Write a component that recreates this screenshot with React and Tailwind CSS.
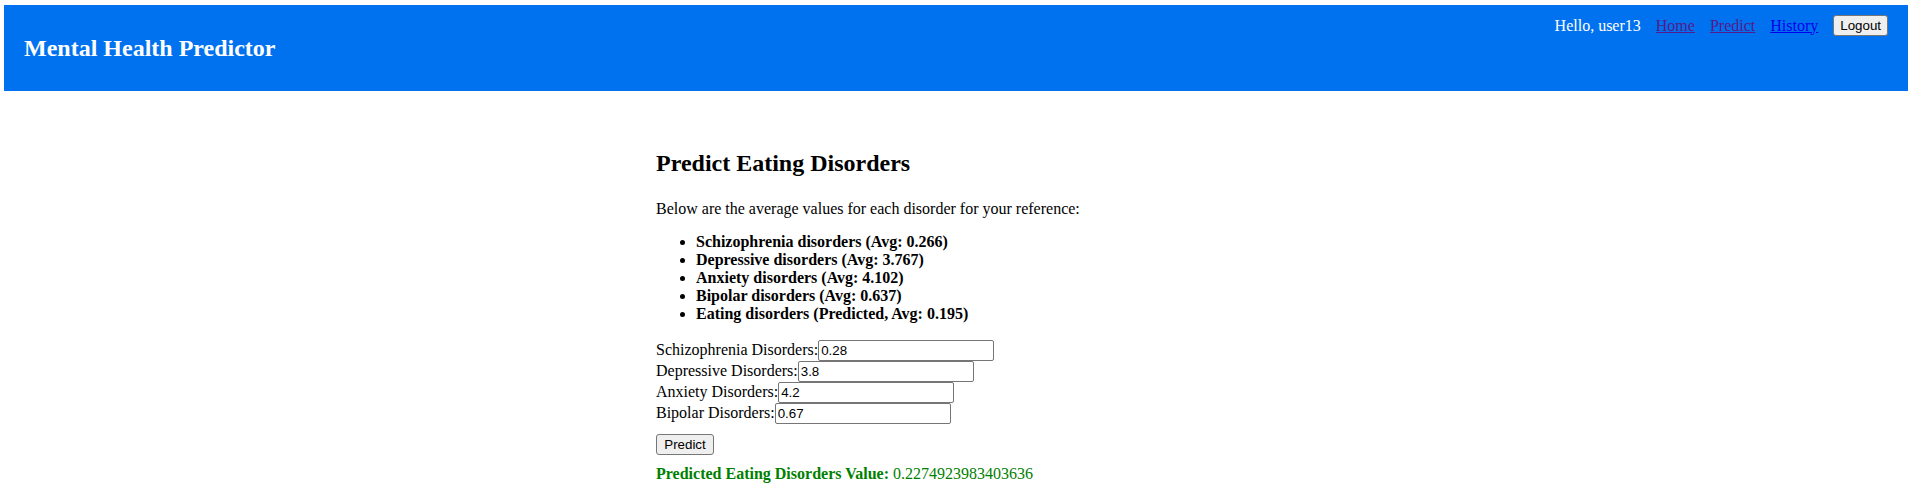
import React, { useState } from 'react';

const averages = [
  { label: 'Schizophrenia disorders', avg: '0.266' },
  { label: 'Depressive disorders', avg: '3.767' },
  { label: 'Anxiety disorders', avg: '4.102' },
  { label: 'Bipolar disorders', avg: '0.637' },
  { label: 'Eating disorders', avg: '0.195', predicted: true },
];

const fields = [
  { name: 'schizophrenia', label: 'Schizophrenia Disorders:', value: '0.28' },
  { name: 'depressive', label: 'Depressive Disorders:', value: '3.8' },
  { name: 'anxiety', label: 'Anxiety Disorders:', value: '4.2' },
  { name: 'bipolar', label: 'Bipolar Disorders:', value: '0.67' },
];

const App = () => {
  const [form, setForm] = useState(
    Object.fromEntries(fields.map((f) => [f.name, f.value]))
  );

  return (
    <div className="font-['Liberation_Serif','Times_New_Roman',serif] text-[16px] leading-[18px] text-black bg-white min-h-screen">
      {/* Header */}
      <header className="ml-[4px] mr-[7px] mt-[5px] h-[86px] bg-[#0072f0] text-white flex justify-between px-[20px]">
        <h2 className="self-center text-[24px] leading-normal font-bold">Mental Health Predictor</h2>
        <nav className="self-start pt-[10px] flex items-center gap-[15px]">
          <span>Hello, user13</span>
          <a href="#" className="underline text-[#551a8b]">Home</a>
          <a href="#" className="underline text-[#551a8b]">Predict</a>
          <a href="#" className="underline text-[#0000ee]">History</a>
          <button className="h-[21px] px-[6px] bg-[#efefef] text-black border border-[#767676] rounded-[3px] font-['Liberation_Sans',Arial,sans-serif] text-[13.33px] leading-none">
            Logout
          </button>
        </nav>
      </header>

      {/* Main Content */}
      <main className="ml-[4px] mr-[7px]">
        <div className="w-[600px] mx-auto pt-[54px]">
          <h2 className="text-[24px] leading-normal font-bold">Predict Eating Disorders</h2>
          <p className="mt-[19px]">Below are the average values for each disorder for your reference:</p>

          <ul className="mt-[15px] list-disc pl-[40px]">
            {averages.map((a) => (
              <li key={a.label} className="font-bold">
                {a.label} ({a.predicted ? 'Predicted, ' : ''}Avg: {a.avg})
              </li>
            ))}
          </ul>

          <form className="mt-[17px]" onSubmit={(e) => e.preventDefault()}>
            {fields.map((f) => (
              <div key={f.name} className="flex items-baseline h-[21px]">
                <label htmlFor={f.name}>{f.label}</label>
                <input
                  id={f.name}
                  type="text"
                  value={form[f.name]}
                  onChange={(e) => setForm({ ...form, [f.name]: e.target.value })}
                  className="w-[176px] h-[21px] px-[2px] border border-[#767676] rounded-[2px] font-['Liberation_Sans',Arial,sans-serif] text-[13.33px] text-black bg-white"
                />
              </div>
            ))}
            <button
              type="submit"
              className="mt-[10px] h-[21px] w-[58px] bg-[#efefef] text-black border border-[#767676] rounded-[3px] font-['Liberation_Sans',Arial,sans-serif] text-[13.33px] leading-none"
            >
              Predict
            </button>
          </form>

          <p className="mt-[10px] text-[#008000]">
            <strong>Predicted Eating Disorders Value:</strong> 0.2274923983403636
          </p>
        </div>
      </main>
    </div>
  );
};

export default App;
